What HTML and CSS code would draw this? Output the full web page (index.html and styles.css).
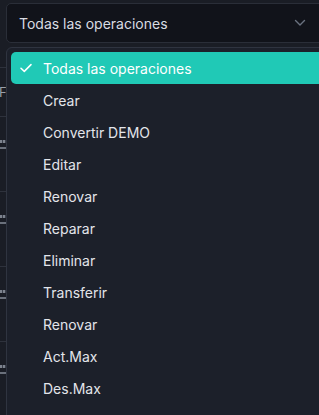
FILE: index.html
```html
<!DOCTYPE html>
<html lang="es">
<head>
<meta charset="utf-8">
<link rel="stylesheet" href="styles.css">
</head>
<body>
<div class="viewport">
<div class="page">
  <div class="select">
    <span class="select-value">Todas las operaciones</span>
    <svg class="chevron" width="12" height="8" viewBox="0 0 12 8"><path d="M1.5 1.5 L6 6 L10.5 1.5" fill="none" stroke="#6b7280" stroke-width="1.4" stroke-linecap="round" stroke-linejoin="round"/></svg>
  </div>
  <div class="content">
    <div class="table">
      <div class="row head"><span class="cell-text">F</span></div>
      <div class="row"><div class="mark"><i></i><b></b></div></div>
      <div class="row"><div class="mark"><i></i><b></b></div></div>
      <div class="row"><div class="mark"><i></i><b></b></div></div>
      <div class="row"><div class="mark"><i></i><b></b></div></div>
    </div>
    <ul class="menu">
      <li class="item selected">
        <svg class="check" width="12" height="10" viewBox="0 0 12 10"><path d="M1 5.2 L4.3 8.4 L11 1.6" fill="none" stroke="#ffffff" stroke-width="1.5" stroke-linecap="round" stroke-linejoin="round"/></svg>
        <span>Todas las operaciones</span>
      </li>
      <li class="item"><span>Crear</span></li>
      <li class="item"><span>Convertir DEMO</span></li>
      <li class="item"><span>Editar</span></li>
      <li class="item"><span>Renovar</span></li>
      <li class="item"><span>Reparar</span></li>
      <li class="item"><span>Eliminar</span></li>
      <li class="item"><span>Transferir</span></li>
      <li class="item"><span>Renovar</span></li>
      <li class="item"><span>Act.Max</span></li>
      <li class="item"><span>Des.Max</span></li>
    </ul>
  </div>
</div>
</div>
</body>
</html>
```
FILE: styles.css
```css
html, body {
  margin: 0;
  padding: 0;
  background: #1a1d25;
  overflow: hidden;
}
body {
  font-family: Inter, "Noto Sans", "Liberation Sans", sans-serif;
  font-size: 14px;
  color: #e6e8ec;
}
.viewport {
  width: 319px;
  height: 415px;
  overflow: hidden;
}
.page {
  padding: 3px 0 0 6px;
  width: 340px;
}
.select {
  box-sizing: border-box;
  width: 334px;
  height: 40px;
  background: #11131a;
  border: 1px solid #2a2e38;
  border-radius: 5px;
  display: flex;
  align-items: center;
  padding: 0 33px 0 12px;
  justify-content: space-between;
}
.select-value {
  color: #d9dce2;
}
.chevron {
  display: block;
}
.content {
  position: relative;
  margin-left: -6px;
  margin-top: 4px;
}
.table {
  padding-top: 20px;
}
.row {
  box-sizing: border-box;
  height: 75px;
  border-top: 1px solid #2e323c;
  width: 6px;
}
.row.head {
  height: 49px;
  display: flex;
  align-items: center;
}
.cell-text {
  color: #9aa0aa;
  font-size: 13px;
  margin-left: -1px;
}
.mark {
  padding-top: 23px;
  display: flex;
  flex-direction: column;
  gap: 4px;
}
.mark i {
  display: block;
  height: 3px;
  width: 6px;
  background: repeating-linear-gradient(90deg, #7d838e 0 2px, #3a3f4a 2px 3px);
}
.mark b {
  display: block;
  height: 2px;
  width: 6px;
  background: #6a707b;
}
.menu {
  position: absolute;
  top: 0;
  left: 6px;
  margin: 0;
  list-style: none;
  box-sizing: border-box;
  width: 322px;
  padding: 4px 4px 16px;
  background: #1c202a;
  border: 1px solid #2f3440;
  border-radius: 6px;
}
.item {
  height: 32px;
  display: flex;
  align-items: center;
  padding-left: 32px;
  color: #e3e5ea;
  border-radius: 5px;
  position: relative;
}
.item.selected {
  background: #20c9b6;
  color: #ffffff;
}
.check {
  position: absolute;
  left: 9px;
  top: 11px;
}
```
